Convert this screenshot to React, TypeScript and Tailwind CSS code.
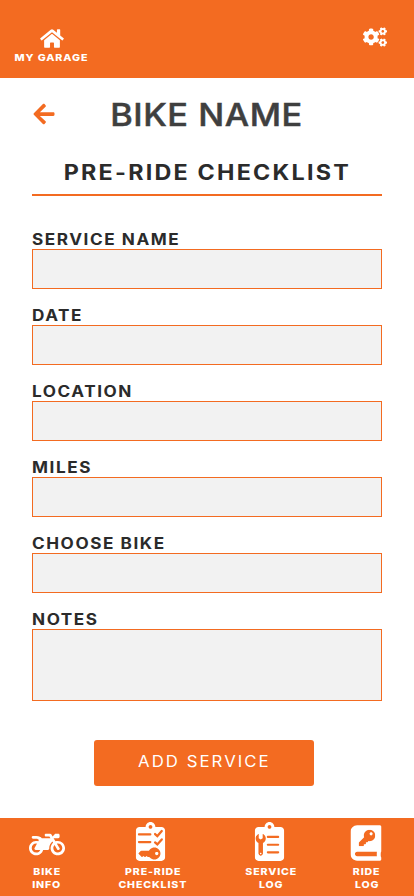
import type { ReactNode } from "react";
import { FaArrowLeft, FaCogs, FaHome, FaKey, FaMotorcycle, FaWrench } from "react-icons/fa";

const ORANGE = "#f36b21";

const CLIPBOARD =
  "M384 112v352c0 26.51-21.49 48-48 48H48c-26.51 0-48-21.49-48-48V112c0-26.51 21.49-48 48-48h80c0-35.29 28.71-64 64-64s64 28.71 64 64h80c26.51 0 48 21.49 48 48zM192 40c-13.255 0-24 10.745-24 24s10.745 24 24 24 24-10.745 24-24-10.745-24-24-24";

function ChecklistIcon() {
  return (
    <svg viewBox="0 0 384 512" className="h-[39px] w-[30px]" fill="none">
      <path d={CLIPBOARD} fill="white" />
      <g stroke={ORANGE} strokeWidth="28" strokeLinecap="round">
        <path d="M40 163H190M40 264H190" />
        <path strokeWidth="30" d="M252 158l30 27 58-66M252 268l30 27 58-66" />
      </g>
      <g transform="rotate(45 192 414)">
        <FaKey size={232} x={76} y={298} color={ORANGE} />
      </g>
    </svg>
  );
}

function ServiceIcon() {
  return (
    <svg viewBox="0 0 384 512" className="h-[39px] w-[30px]" fill="none">
      <path d={CLIPBOARD} fill="white" />
      <path d="M170 196H306M170 298H306M170 398H306" stroke={ORANGE} strokeWidth="28" strokeLinecap="round" />
      <g transform="rotate(-45 78 290)">
        <FaWrench size={236} x={-40} y={170} color={ORANGE} />
      </g>
    </svg>
  );
}

function RideIcon() {
  return (
    <svg viewBox="0 0 448 512" className="h-[36px] w-[31px]" fill="none">
      <path
        fill="white"
        d="M448 370V24c0-13.3-10.7-24-24-24H96C43 0 0 43 0 96v320c0 53 43 96 96 96h328c13.3 0 24-10.7 24-24v-16c0-7.5-3.5-14.3-8.9-18.7-3-15.4-3-49.3 0-64.7 5.4-4.3 8.9-11.1 8.9-18.6z"
      />
      <path fill={ORANGE} d="M381.4 448H96c-17.7 0-32-14.3-32-32 0-17.6 14.4-32 32-32h285.4c-1.9 17.1-1.9 46.9 0 64z" />
      <FaKey size={240} x={118} y={64} color={ORANGE} />
    </svg>
  );
}

function NavItem({ icon, lines, width }: { icon: ReactNode; lines: string[]; width: string }) {
  return (
    <a className={`flex flex-col items-center ${width}`}>
      <span className="flex h-[47px] items-start justify-center">{icon}</span>
      {lines.map((line) => (
        <span
          key={line}
          className="block scale-x-[1.13] pl-[0.8px] text-[9.4px] leading-[13px] font-extrabold tracking-[0.75px] whitespace-nowrap"
        >
          {line}
        </span>
      ))}
    </a>
  );
}

function Field({ label, tall = false }: { label: string; tall?: boolean }) {
  return (
    <label className="block">
      <span className="block h-5 origin-left scale-x-[1.12] text-[15.3px] leading-[21px] font-bold tracking-[1.4px]">
        {label}
      </span>
      {tall ? (
        <textarea className="block h-[72px] w-full resize-none border border-[#f36b21] bg-[#f2f2f2]" />
      ) : (
        <input className="block h-10 w-full border border-[#f36b21] bg-[#f2f2f2]" />
      )}
    </label>
  );
}

export default function App() {
  return (
    <div className="flex h-[896px] w-[414px] flex-col overflow-hidden bg-white font-['Inter',sans-serif] text-[#2b2b2b]">
      <header className="flex h-[78px] shrink-0 items-start justify-between bg-[#f36b21] text-white">
        <a className="ml-[14px] flex w-[74px] flex-col items-center pt-[28px]">
          <FaHome className="ml-[2px] h-[21px] w-6" />
          <span className="mt-[2px] scale-x-[1.14] text-[9.4px] leading-[13px] font-extrabold tracking-[0.8px] whitespace-nowrap">
            MY GARAGE
          </span>
        </a>
        <FaCogs className="mt-[27px] mr-[27px] h-5 w-6" />
      </header>

      <main className="flex grow flex-col px-8">
        <div className="flex h-[72px] items-center">
          <FaArrowLeft className="h-6 w-6 text-[#f36b21]" />
          <h1 className="w-[301px] scale-x-[1.09] pt-[1px] text-center text-[31.5px] leading-none font-medium tracking-[0.5px] text-[#3f3f3f] [-webkit-text-stroke:0.5px_#3f3f3f]">
            BIKE NAME
          </h1>
        </div>
        <h2 className="flex h-[46px] items-center justify-center border-b-2 border-[#f36b21] pt-[1px]">
          <span className="scale-x-[1.11] text-[21px] leading-none font-bold tracking-[2px] whitespace-nowrap">
            PRE-RIDE CHECKLIST
          </span>
        </h2>
        <form className="mt-[33px] flex flex-col gap-4">
          <Field label="SERVICE NAME" />
          <Field label="DATE" />
          <Field label="LOCATION" />
          <Field label="MILES" />
          <Field label="CHOOSE BIKE" />
          <Field label="NOTES" tall />
          <button
            type="button"
            className="mt-[23px] ml-[62px] flex h-[46px] w-[220px] items-center justify-center rounded-[3px] bg-[#f36b21] text-white"
          >
            <span className="-mt-[2px] scale-x-[1.08] text-[15.5px] tracking-[1.9px]">ADD SERVICE</span>
          </button>
        </form>
      </main>

      <nav className="flex h-[78px] shrink-0 justify-between bg-[#f36b21] pr-[33px] pl-8 text-white">
        <NavItem icon={<FaMotorcycle className="mt-[12px] h-[29px] w-9 shrink-0" />} lines={["BIKE", "INFO"]} width="w-[29px]" />
        <NavItem
          icon={<span className="-ml-[4px] pt-[4px]"><ChecklistIcon /></span>}
          lines={["PRE-RIDE", "CHECKLIST"]}
          width="w-[68px] translate-x-[1.5px]"
        />
        <NavItem
          icon={<span className="-ml-[2px] pt-[4px]"><ServiceIcon /></span>}
          lines={["SERVICE", "LOG"]}
          width="w-[53px] translate-x-[2.5px]"
        />
        <NavItem icon={<span className="-ml-[1px] pt-[7px]"><RideIcon /></span>} lines={["RIDE", "LOG"]} width="w-[30px] translate-x-[0.5px]" />
      </nav>
    </div>
  );
}
